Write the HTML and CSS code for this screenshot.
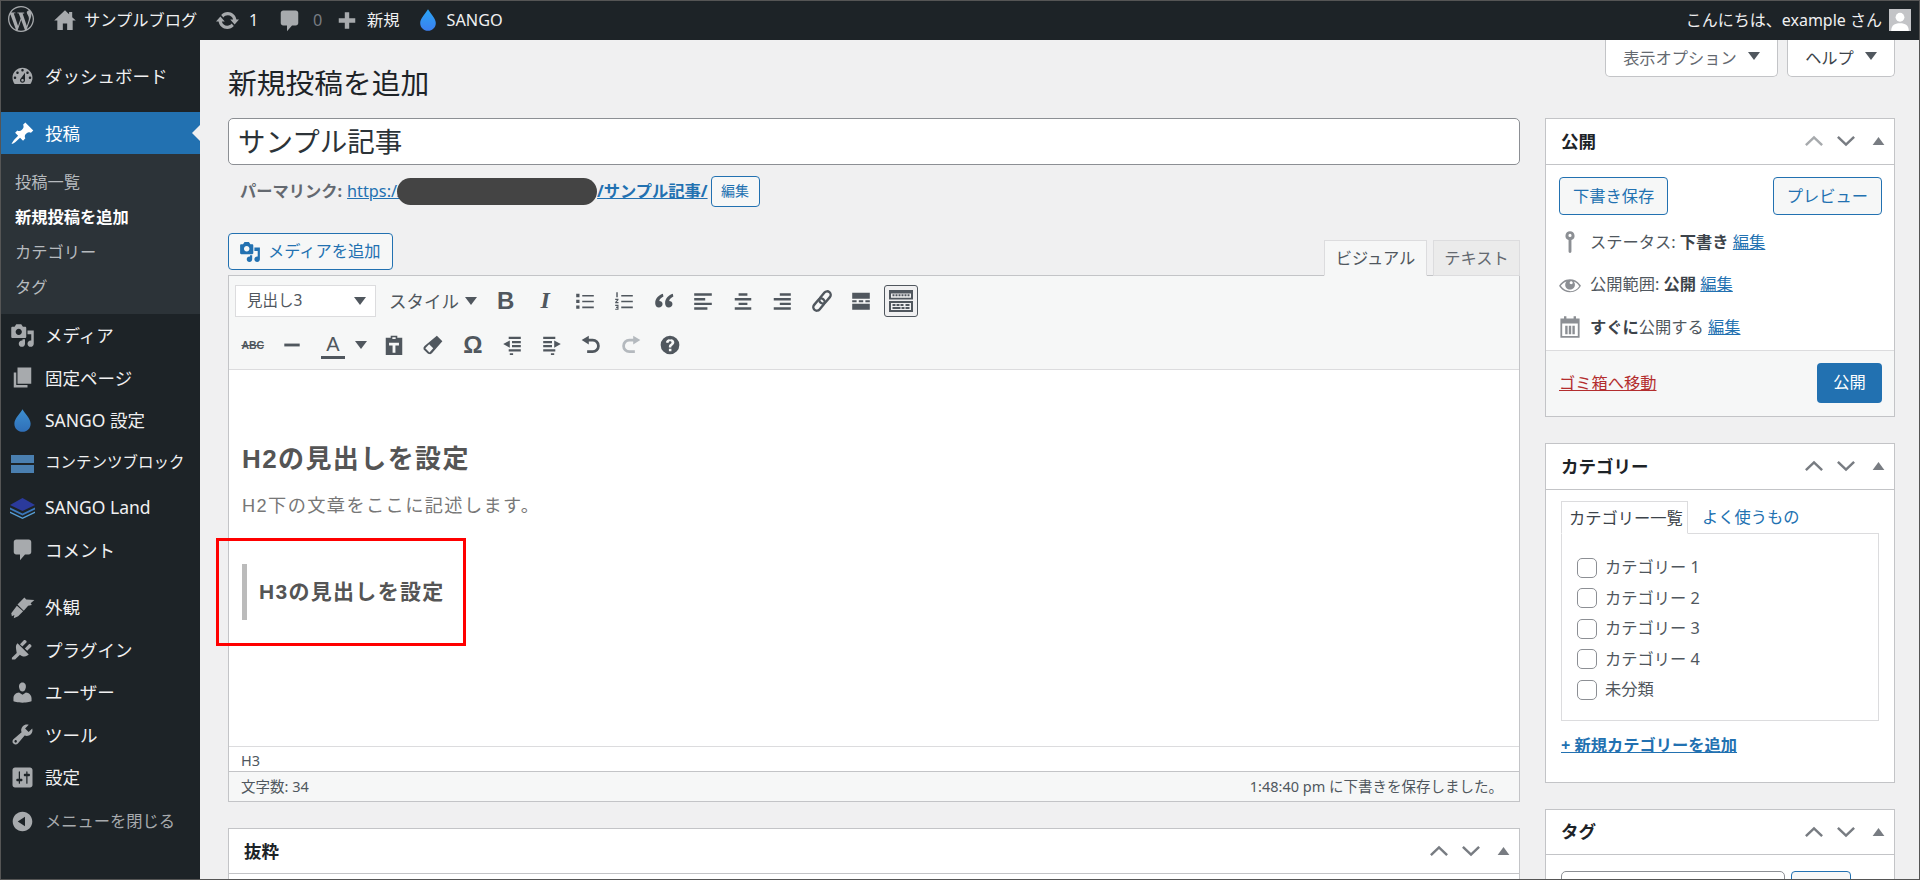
FILE: index.html
```html
<!DOCTYPE html>
<html lang="ja">
<head>
  <meta charset="UTF-8" />
  <title>新規投稿を追加</title>
  <link rel="stylesheet" href="styles.css">
</head>
<body>

<!-- アイコン定義 -->
<svg class="defs" width="0" height="0">
  <defs>
    <linearGradient id="dropBlue" x1="0" y1="0" x2="0" y2="1"><stop offset="0" stop-color="#2aa5f5"/><stop offset="1" stop-color="#3b7ff0"/></linearGradient>
    <linearGradient id="dropDim" x1="0" y1="0" x2="0" y2="1"><stop offset="0" stop-color="#3d8fd0"/><stop offset="1" stop-color="#2f6fb8"/></linearGradient>
  </defs>
  <symbol id="i-wp" viewBox="0 0 24 24"><path d="M21.469 6.825c.84 1.537 1.318 3.3 1.318 5.175 0 3.979-2.156 7.456-5.363 9.325l3.295-9.527c.615-1.54.82-2.771.82-3.864 0-.405-.026-.78-.07-1.11m-7.981.105c.647-.03 1.232-.105 1.232-.105.582-.075.514-.93-.067-.899 0 0-1.755.135-2.88.135-1.064 0-2.85-.15-2.85-.15-.585-.03-.661.855-.075.885 0 0 .54.061 1.125.09l1.68 4.605-2.37 7.08L5.354 6.9c.649-.03 1.234-.1 1.234-.1.585-.075.516-.93-.065-.896 0 0-1.746.138-2.874.138-.2 0-.438-.008-.69-.015C4.911 3.15 8.235 1.215 12 1.215c2.809 0 5.365 1.072 7.286 2.833-.046-.003-.091-.009-.141-.009-1.06 0-1.812.923-1.812 1.914 0 .89.513 1.643 1.06 2.531.411.72.89 1.643.89 2.977 0 .915-.354 1.994-.821 3.479l-1.075 3.585-3.9-11.61.001.014zM12 22.784c-1.059 0-2.081-.153-3.048-.437l3.237-9.406 3.315 9.087c.024.053.05.101.078.149-1.12.393-2.325.609-3.582.609M1.211 12c0-1.564.336-3.05.935-4.39L7.29 21.709C3.694 19.96 1.212 16.271 1.211 12M12 0C5.385 0 0 5.385 0 12s5.385 12 12 12 12-5.385 12-12S18.615 0 12 0"/></symbol>
  <symbol id="i-home" viewBox="0 0 20 20"><path d="M10 1.5L1 10h2.6v8h4.6v-5.5h3.6V18h4.6v-8H19l-3-2.8V3h-2.6v1.8z"/></symbol>
  <symbol id="i-update" viewBox="0 0 20 20"><path d="M10.2 3.28c3.53 0 6.43 2.61 6.92 6h2.08l-3.5 4-3.5-4h2.32c-.45-1.97-2.21-3.45-4.32-3.45-1.45 0-2.73.71-3.54 1.78L4.95 5.66C6.23 4.2 8.11 3.28 10.2 3.28zm-.4 13.44c-3.52 0-6.43-2.61-6.92-6H.8l3.5-4c1.17 1.33 2.33 2.67 3.5 4H5.48c.45 1.97 2.21 3.45 4.32 3.45 1.45 0 2.73-.71 3.54-1.78l1.71 1.95c-1.28 1.46-3.15 2.38-5.25 2.38z"/></symbol>
  <symbol id="i-comment" viewBox="0 0 20 20"><path d="M5 2h10c1.1 0 2 .9 2 2v8c0 1.1-.9 2-2 2h-3l-4 4.5V14H5c-1.1 0-2-.9-2-2V4c0-1.1.9-2 2-2z"/></symbol>
  <symbol id="i-plus" viewBox="0 0 20 20"><path d="M8 2.500h4v5.500h5.500v4H12v5.500H8V12H2.500V8H8z"/></symbol>
  <symbol id="i-drop" viewBox="0 0 20 20"><path d="M10 1c2 3.500 6.500 7.500 6.500 11.500C16.500 16.300 13.600 19 10 19s-6.500-2.700-6.500-6.500C3.500 8.500 8 4.500 10 1z"/></symbol>
  <symbol id="i-dashboard" viewBox="0 0 20 20"><path d="M3.76 16h12.48c1.1-1.37 1.76-3.11 1.76-5 0-4.42-3.58-8-8-8s-8 3.58-8 8c0 1.89.66 3.63 1.76 5zM10 4c.55 0 1 .45 1 1s-.45 1-1 1-1-.45-1-1 .45-1 1-1zM6 6c.55 0 1 .45 1 1s-.45 1-1 1-1-.45-1-1 .45-1 1-1zm8 0c.55 0 1 .45 1 1s-.45 1-1 1-1-.45-1-1 .45-1 1-1zm-5.37 5.55L12 7v6c0 1.1-.9 2-2 2s-2-.9-2-2c0-.57.24-1.08.63-1.45zM4 10c.55 0 1 .45 1 1s-.45 1-1 1-1-.45-1-1 .45-1 1-1zm12 0c.55 0 1 .45 1 1s-.45 1-1 1-1-.45-1-1 .45-1 1-1zm-5 3c0-.55-.45-1-1-1s-1 .45-1 1 .45 1 1 1 1-.45 1-1z" fill-rule="evenodd"/></symbol>
  <symbol id="i-pin" viewBox="0 0 20 20"><path d="M10.44 3.02l1.82-1.82 6.36 6.35-1.83 1.82c-1.05-.68-2.48-.57-3.41.36l-.75.75c-.92.93-1.04 2.35-.35 3.41l-1.83 1.82-2.41-2.41-2.8 2.79c-.42.42-3.38 2.71-3.8 2.29s1.86-3.39 2.28-3.81l2.79-2.79L4.1 9.36l1.83-1.82c1.05.69 2.48.57 3.4-.36l.75-.75c.93-.92 1.05-2.35.36-3.41z"/></symbol>
  <symbol id="i-media" viewBox="0 0 20 20"><path d="M13 11V4c0-.55-.45-1-1-1h-1.670L9 1H5L3.670 3H2c-.55 0-1 .45-1 1v7c0 .55.45 1 1 1h10c.55 0 1-.45 1-1zM7 4.500c1.380 0 2.500 1.120 2.500 2.500S8.380 9.500 7 9.500 4.500 8.380 4.500 7 5.620 4.500 7 4.500zM14 6h5v10.500c0 1.380-1.120 2.500-2.500 2.500S14 17.880 14 16.500s1.120-2.500 2.500-2.500c.17 0 .34.02.5.05V9h-3V6zm-4 8.050V13h2v3.500c0 1.380-1.120 2.500-2.500 2.500S7 17.880 7 16.500 8.120 14 9.500 14c.17 0 .34.02.5.05z" fill-rule="evenodd"/></symbol>
  <symbol id="i-page" viewBox="0 0 20 20"><path d="M6 15V2h11v13H6zm-1 1h9v2H3V6h2v10z"/></symbol>
  <symbol id="i-brush" viewBox="0 0 20 20"><path d="M19.500 4l-6.500-.5-1.500-1.500-5.500 5.500 5 5 3.500-4 3-.5-1-1.500zM5.500 8.500L1 14.500 1.500 17l2-1-.5 2.500 3.500-1.500 4-4z"/></symbol>
  <symbol id="i-plugin" viewBox="0 0 20 20"><path d="M13.110 4.360L9.870 7.600 8 5.730l3.240-3.240c.35-.34 1.050-.2 1.560.32.520.510.660 1.210.310 1.550zm-8 1.770l.91-1.120 9.010 9.010-1.190.84c-.71.520-1.590.760-2.440.760-1.320 0-2.560-.550-3.440-1.420l-3.880 3.880H1.500v-1.500l3.880-3.880C4.760 9.140 4.420 7.490 5.110 6.130zm11.890 1.600l-3.240 3.240-1.870-1.870 3.240-3.240c.35-.34 1.050-.2 1.560.32.510.510.650 1.210.310 1.550z"/></symbol>
  <symbol id="i-users" viewBox="0 0 20 20"><path d="M10 9.250c-2.270 0-2.730-3.440-2.730-3.440C7 4.020 7.820 2 9.970 2c2.160 0 2.980 2.020 2.710 3.810 0 0-.41 3.440-2.680 3.440zm0 2.570L12.720 10c2.390 0 4.520 2.330 4.520 4.530v2.490s-3.650 1.130-7.240 1.130c-3.650 0-7.240-1.130-7.240-1.130v-2.490c0-2.250 1.940-4.480 4.470-4.480z"/></symbol>
  <symbol id="i-tools" viewBox="0 0 20 20"><path d="M16.680 9.770c-1.340 1.340-3.300 1.670-4.950.99l-5.410 6.520c-.99.99-2.590.99-3.580 0s-.99-2.590 0-3.570l6.520-5.420c-.68-1.650-.35-3.610.99-4.950 1.280-1.280 3.120-1.620 4.720-1.060l-2.890 2.890 2.820 2.820 2.860-2.870c.53 1.580.18 3.390-1.080 4.650zM3.810 16.210c.4.39 1.040.39 1.430 0 .4-.4.4-1.040 0-1.430-.39-.4-1.030-.4-1.430 0-.39.39-.39 1.030 0 1.430z" fill-rule="evenodd"/></symbol>
  <symbol id="i-settings" viewBox="0 0 20 20"><path d="M18 16V4c0-1.100-.9-2-2-2H4c-1.100 0-2 .9-2 2v12c0 1.100.9 2 2 2h12c1.100 0 2-.9 2-2zM8 11h1c.55 0 1 .45 1 1s-.45 1-1 1H8v1.500c0 .28-.22.5-.5.5s-.5-.22-.5-.5V13H6c-.55 0-1-.45-1-1s.45-1 1-1h1V5.500c0-.28.22-.5.5-.5s.5.22.5.5V11zm5-2h-1c-.55 0-1-.45-1-1s.45-1 1-1h1V5.500c0-.28.22-.5.5-.5s.5.22.5.5V7h1c.55 0 1 .45 1 1s-.45 1-1 1h-1v5.500c0 .28-.22.5-.5.5s-.5-.22-.5-.5V9z" fill-rule="evenodd"/></symbol>
  <symbol id="i-collapse" viewBox="0 0 20 20"><path d="M10 2.160c4.330 0 7.840 3.510 7.840 7.840s-3.510 7.840-7.840 7.840S2.160 14.330 2.160 10 5.710 2.160 10 2.160zm2 11.720V6.120L6.180 9.970z" fill-rule="evenodd"/></symbol>
  <symbol id="i-key" viewBox="0 0 20 20"><path d="M10 1a3.800 3.800 0 0 1 1.200 7.400V18a1.200 1.200 0 0 1-2.400 0V8.400A3.800 3.800 0 0 1 10 1zm0 2.200a1.300 1.300 0 1 0 0 2.600 1.300 1.300 0 0 0 0-2.600z" fill-rule="evenodd"/></symbol>
  <symbol id="i-eye" viewBox="0 0 20 20"><path d="M18.300 9.500C15 4.900 8.500 3.800 3.900 7.200c-1.200.9-2.200 2.100-3 3.400.2.4.5.8.8 1.200 3.300 4.600 9.600 5.600 14.200 2.400.9-.7 1.700-1.400 2.400-2.400.3-.4.5-.8.8-1.200-.3-.4-.5-.8-.8-1.100zm-8.200-2.300c.5-.5 1.300-.5 1.800 0s.5 1.300 0 1.800-1.300.5-1.800 0c-.5-.5-.5-1.300 0-1.800zm-.1 7.700c-3.100 0-6-1.600-7.700-4.200C3.500 9 5.100 7.800 7 7c-.7.8-1 1.700-1 2.700 0 2.200 1.700 4.100 4 4.100 2.200 0 4.100-1.700 4.100-4 0-1-.4-2-1-2.700 1.900.8 3.400 2 4.600 3.900-1.700 2.700-4.600 4.200-7.700 4.200z" fill-rule="evenodd"/></symbol>
  <symbol id="i-calendar" viewBox="0 0 20 20"><path d="M5 1h2v2h6V1h2v2h3v16H2V3h3zM3.500 7v10.500h13V7zM6 9h2v7H6zm3 0h2v7H9zm3 0h2v7h-2z" fill-rule="evenodd"/></symbol>
  <symbol id="i-up" viewBox="0 0 20 20"><path d="M1 14.500L10 6l9 8.500" fill="none" stroke="currentColor" stroke-width="2.800"/></symbol>
  <symbol id="i-down" viewBox="0 0 20 20"><path d="M1 5.500L10 14l9-8.500" fill="none" stroke="currentColor" stroke-width="2.800"/></symbol>
  <symbol id="i-tri" viewBox="0 0 20 20"><path d="M10 4l9 12H1z"/></symbol>
  <symbol id="i-ul" viewBox="0 0 20 20"><path d="M2 3.500h3v3H2zM2 8.800h3v3H2zM2 14h3v3H2zM7.500 4.500H18V6H7.500zM7.500 9.700H18v1.500H7.500zM7.500 15H18v1.500H7.500z"/></symbol>
  <symbol id="i-ol" viewBox="0 0 20 20"><path d="M7.500 4.500H18V6H7.500zM7.500 9.700H18v1.500H7.500zM7.500 15H18v1.500H7.500zM3 2h1.300v4.500H3zM2 8h3v1l-1.700 2H5v1H2v-1l1.700-2H2zM2 13.500h3v4.500H2v-1h2v-.7H2.800v-1H4v-.8H2z"/></symbol>
  <symbol id="i-quote" viewBox="0 0 20 20"><path d="M9 3.500C5.500 4.500 2 7.500 2 12c0 2.500 1.500 4 3.300 4s3.400-1.300 3.400-3.200-1.300-2.900-3-2.900C6 8.300 7.500 7 9.500 6zM18 3.500c-3.500 1-7 4-7 8.500 0 2.500 1.500 4 3.300 4s3.400-1.300 3.400-3.200-1.300-2.900-3-2.900c.3-1.600 1.800-2.900 3.800-3.900z"/></symbol>
  <symbol id="i-left" viewBox="0 0 20 20"><path d="M2 3h16v2.200H2zM2 7.300h10v2.200H2zM2 11.500h16v2.200H2zM2 15.700h12v2.200H2z"/></symbol>
  <symbol id="i-center" viewBox="0 0 20 20"><path d="M6 3h8v2.200H6zM2.500 7.300h15v2.200h-15zM6 11.500h8v2.200H6zM2.500 15.700h15v2.200h-15z"/></symbol>
  <symbol id="i-right" viewBox="0 0 20 20"><path d="M8 3h10v2.200H8zM2.500 7.300H18v2.200H2.500zM8 11.500h10v2.200H8zM2.500 15.700H18v2.200H2.500z"/></symbol>
  <symbol id="i-link" viewBox="0 0 20 20"><g transform="rotate(-50 10 10)" fill="none" stroke="currentColor" stroke-width="2.200"><rect x="-0.500" y="6.800" width="12.500" height="6.400" rx="3.200"/><rect x="8" y="6.800" width="12.500" height="6.400" rx="3.200"/></g></symbol>
  <symbol id="i-more" viewBox="0 0 20 20"><path d="M2 2.500h16v5.500H2zM2 12.500h16V18H2zM2 9.300h4v1.800H2zM8 9.300h4v1.800H8zM14 9.300h4v1.800h-4z"/></symbol>
  <symbol id="i-kitchen" viewBox="0 0 26 24"><path d="M1 1h24v9.500H1zM3 4.500v4.200h20V4.500zM4.500 5.200h2v2h-2zm3 0h2v2h-2zm3 0h2v2h-2zm3 0h2v2h-2zm3 0h2v2h-2zm3 0h2v2h-2zM1 12h24v11H1zm2 2v7h20v-7zm1.500 1h3v2h-3zm4 0h3v2h-3zm4 0h3v2h-3zm-8 3h8v2h-8zm9 0h3v2h-3zm4-3h4v2h-4zm0 3h4v2h-4z" fill-rule="evenodd"/></symbol>
  <symbol id="i-hr" viewBox="0 0 20 20"><path d="M3 8.700h14v2.600H3z"/></symbol>
  <symbol id="i-paste" viewBox="0 0 20 20"><path d="M7 1.500h6v2h4.500V19h-15V3.500H7zM8.500 3v1.500h3V3zM5.500 8v2.500h3.200V17h2.600v-6.500h3.200V8z" fill-rule="evenodd"/></symbol>
  <symbol id="i-eraser" viewBox="0 0 20 20"><path d="M13.500 1.500l5 5L9 17.500l-1.500 1L5.500 18 1.500 14l-.2-1.500 1-1.500zM3 13l3.800 3.800 3.400-3.900-3.700-3.600z" fill-rule="evenodd"/></symbol>
  <symbol id="i-outdent" viewBox="0 0 20 20"><path d="M7 2.500h11v2H7zM10 6.300h8v2h-8zM10 10h8v2h-8zM7 13.800h11v2H7zM8 17.500h3v1.500H8zM8 6l-6 3.200L8 12.500z"/></symbol>
  <symbol id="i-indent" viewBox="0 0 20 20"><path d="M2 2.500h11v2H2zM2 6.300h8v2H2zM2 10h8v2H2zM2 13.800h11v2H2zM9 17.500h3v1.500H9zM12 6l6 3.200-6 3.300z"/></symbol>
  <symbol id="i-undo" viewBox="0 0 20 20"><path d="M8 1.500v8L1.500 5.500zM7 4.300h4.500a6.500 6.500 0 0 1 0 13H6.500v-2.500h5a4 4 0 0 0 0-8H7z"/></symbol>
  <symbol id="i-redo" viewBox="0 0 20 20"><path d="M12 1.500v8l6.500-4zM13 4.300H8.500a6.500 6.500 0 0 0 0 13h5v-2.500h-5a4 4 0 0 1 0-8H13z"/></symbol>
  <symbol id="i-help" viewBox="0 0 20 20"><path d="M10 1.500a8.500 8.500 0 1 1 0 17 8.500 8.500 0 0 1 0-17zM9 13.300v2.400h2.300v-2.400zM10.200 4.500C8 4.500 6.500 5.700 6.300 7.800l2.300.3c.1-1 .7-1.500 1.500-1.500s1.300.4 1.300 1.100c0 .6-.4 1-1.100 1.500-1 .7-1.400 1.400-1.300 3h2.200c0-.9.200-1.200 1-1.800 1-.7 1.700-1.500 1.700-2.800 0-2-1.500-3.100-3.800-3.100z" fill-rule="evenodd"/></symbol>
</svg>

<!-- 上のバー -->
<div class="adminbar">
  <svg class="ab-wp"><use href="#i-wp"/></svg>
  <div class="ab-item ab-site"><svg class="ab-ico"><use href="#i-home"/></svg>サンプルブログ</div>
  <div class="ab-item ab-up"><svg class="ab-ico"><use href="#i-update"/></svg>1</div>
  <div class="ab-item ab-com"><svg class="ab-ico"><use href="#i-comment"/></svg><span class="dim">0</span></div>
  <div class="ab-item ab-new"><svg class="ab-ico"><use href="#i-plus"/></svg>新規</div>
  <div class="ab-item ab-sango"><svg class="ab-drop"><use href="#i-drop" fill="url(#dropBlue)"/></svg>SANGO</div>
  <div class="ab-user">こんにちは、example さん<span class="avatar"><svg viewBox="0 0 20 20"><circle cx="10" cy="7.500" r="4"/><path d="M2 20c0-5 3-7 8-7s8 2 8 7z"/></svg></span></div>
</div>

<div class="wrap">
  <!-- サイドメニュー -->
  <div class="sidebar">
    <div class="menu-item sep-after"><svg><use href="#i-dashboard"/></svg>ダッシュボード</div>
    <div class="menu-item active"><svg><use href="#i-pin"/></svg>投稿</div>
    <div class="submenu">
      <div class="sub-item">投稿一覧</div>
      <div class="sub-item current">新規投稿を追加</div>
      <div class="sub-item">カテゴリー</div>
      <div class="sub-item">タグ</div>
    </div>
    <div class="menu-item"><svg><use href="#i-media"/></svg>メディア</div>
    <div class="menu-item"><svg><use href="#i-page"/></svg>固定ページ</div>
    <div class="menu-item"><svg><use href="#i-drop" fill="url(#dropDim)"/></svg>SANGO 設定</div>
    <div class="menu-item small"><svg viewBox="0 0 25 25"><path class="bars" d="M1 5h23v8H1zM1 15h23v8H1z"/></svg>コンテンツブロック</div>
    <div class="menu-item"><svg viewBox="0 0 25 25"><path d="M12.500 3L25 10l-12.500 6L0 10z" fill="#2b3a9c"/><path d="M0 12.500l12.500 6 12.500-6v2l-12.500 6L0 14.500z" fill="#3a78bd"/><path d="M0 16.500l12.500 6 12.500-6v1.500l-12.500 6L0 18z" fill="#58a0d8"/></svg>SANGO Land</div>
    <div class="menu-item sep-small"><svg><use href="#i-comment"/></svg>コメント</div>
    <div class="menu-item"><svg><use href="#i-brush"/></svg>外観</div>
    <div class="menu-item"><svg><use href="#i-plugin"/></svg>プラグイン</div>
    <div class="menu-item"><svg><use href="#i-users"/></svg>ユーザー</div>
    <div class="menu-item"><svg><use href="#i-tools"/></svg>ツール</div>
    <div class="menu-item"><svg><use href="#i-settings"/></svg>設定</div>
    <div class="menu-item collapse"><svg><use href="#i-collapse"/></svg>メニューを閉じる</div>
  </div>

  <div class="content">
    <div class="page-head">
      <h1>新規投稿を追加</h1>
      <div class="screen-tabs">
        <div class="screen-tab tab-options">表示オプション<i class="caret"></i></div>
        <div class="screen-tab tab-help">ヘルプ<i class="caret"></i></div>
      </div>
    </div>

    <div class="columns">
      <div class="col-main">
        <div class="title-input">サンプル記事</div>
        <div class="permalink">
          <b>パーマリンク:</b>
          <a href="#" class="perma-url">https://</a><span class="blob"></span><a href="#"><b>/サンプル記事/</b></a>
          <span class="btn-edit">編集</span>
        </div>

        <div class="media-row">
          <div class="btn btn-media"><svg><use href="#i-media"/></svg>メディアを追加</div>
          <div class="editor-tabs">
            <div class="editor-tab on">ビジュアル</div>
            <div class="editor-tab">テキスト</div>
          </div>
        </div>

        <div class="editor">
          <div class="toolbar">
            <div class="tb-row">
              <div class="tb-select">見出し3<i class="caret"></i></div>
              <div class="tb-style">スタイル<i class="caret"></i></div>
              <span class="tb-btn tb-b">B</span>
              <span class="tb-btn tb-i">I</span>
              <span class="tb-btn"><svg><use href="#i-ul"/></svg></span>
              <span class="tb-btn"><svg><use href="#i-ol"/></svg></span>
              <span class="tb-btn"><svg><use href="#i-quote"/></svg></span>
              <span class="tb-btn"><svg><use href="#i-left"/></svg></span>
              <span class="tb-btn"><svg><use href="#i-center"/></svg></span>
              <span class="tb-btn"><svg><use href="#i-right"/></svg></span>
              <span class="tb-btn"><svg><use href="#i-link"/></svg></span>
              <span class="tb-btn"><svg><use href="#i-more"/></svg></span>
              <span class="tb-btn tb-kitchen"><svg><use href="#i-kitchen"/></svg></span>
            </div>
            <div class="tb-row">
              <span class="tb-btn tb-abc">ABC</span>
              <span class="tb-btn"><svg><use href="#i-hr"/></svg></span>
              <span class="tb-btn tb-color"><span class="tb-a">A</span><i class="caret"></i></span>
              <span class="tb-btn"><svg><use href="#i-paste"/></svg></span>
              <span class="tb-btn"><svg><use href="#i-eraser"/></svg></span>
              <span class="tb-btn tb-omega">Ω</span>
              <span class="tb-btn"><svg><use href="#i-outdent"/></svg></span>
              <span class="tb-btn"><svg><use href="#i-indent"/></svg></span>
              <span class="tb-btn"><svg><use href="#i-undo"/></svg></span>
              <span class="tb-btn tb-off"><svg><use href="#i-redo"/></svg></span>
              <span class="tb-btn"><svg><use href="#i-help"/></svg></span>
            </div>
          </div>

          <div class="editor-body">
            <h2>H2の見出しを設定</h2>
            <p>H2下の文章をここに記述します。</p>
            <h3>H3の見出しを設定</h3>
            <div class="red-box"></div>
          </div>
          <div class="path-row">H3</div>
          <div class="status-row"><span>文字数: 34</span><span>1:48:40 pm に下書きを保存しました。</span></div>
        </div>

        <div class="box box-excerpt">
          <div class="box-head">抜粋
            <span class="box-ctrl"><svg><use href="#i-up"/></svg><svg><use href="#i-down"/></svg><svg class="tri"><use href="#i-tri"/></svg></span>
          </div>
        </div>
      </div>

      <div class="col-side">
        <div class="box">
          <div class="box-head">公開
            <span class="box-ctrl"><svg class="off"><use href="#i-up"/></svg><svg><use href="#i-down"/></svg><svg class="tri"><use href="#i-tri"/></svg></span>
          </div>
          <div class="pub-actions">
            <div class="btn">下書き保存</div>
            <div class="btn">プレビュー</div>
          </div>
          <div class="pub-row"><svg><use href="#i-key"/></svg><span>ステータス: <b>下書き</b> <a href="#">編集</a></span></div>
          <div class="pub-row"><svg><use href="#i-eye"/></svg><span>公開範囲: <b>公開</b> <a href="#">編集</a></span></div>
          <div class="pub-row"><svg><use href="#i-calendar"/></svg><span><b>すぐに</b>公開する <a href="#">編集</a></span></div>
          <div class="pub-foot">
            <a href="#" class="trash">ゴミ箱へ移動</a>
            <div class="btn-primary">公開</div>
          </div>
        </div>

        <div class="box box-cat">
          <div class="box-head">カテゴリー
            <span class="box-ctrl"><svg><use href="#i-up"/></svg><svg><use href="#i-down"/></svg><svg class="tri"><use href="#i-tri"/></svg></span>
          </div>
          <div class="cat-body">
            <div class="cat-tabs">
              <div class="cat-tab on">カテゴリー一覧</div>
              <a href="#" class="cat-tab cat-link">よく使うもの</a>
            </div>
            <div class="cat-panel">
              <label class="cat-row"><input type="checkbox" />カテゴリー 1</label>
              <label class="cat-row"><input type="checkbox" />カテゴリー 2</label>
              <label class="cat-row"><input type="checkbox" />カテゴリー 3</label>
              <label class="cat-row"><input type="checkbox" />カテゴリー 4</label>
              <label class="cat-row"><input type="checkbox" />未分類</label>
            </div>
            <a href="#" class="cat-add"><b>+ 新規カテゴリーを追加</b></a>
          </div>
        </div>

        <div class="box box-tag">
          <div class="box-head">タグ
            <span class="box-ctrl"><svg><use href="#i-up"/></svg><svg><use href="#i-down"/></svg><svg class="tri"><use href="#i-tri"/></svg></span>
          </div>
          <div class="tag-body">
            <span class="tag-input"></span>
            <span class="tag-btn"></span>
          </div>
        </div>
      </div>
    </div>
  </div>
</div>

<!-- 画像の外枠 -->
<div class="frame"></div>

</body>
</html>
```

FILE: styles.css
```css
* { box-sizing: border-box; }
html, body { height: 880px; overflow: hidden; }
body { margin: 0; background: #f0f0f1; color: #3c434a; font: 16.25px/1.4 "Noto Sans", "Noto Sans CJK JP", sans-serif; }
a { color: #2271b1; }
h1, h2, h3, p { margin: 0; font-weight: 400; }
.defs { position: absolute; }
.frame { position: fixed; inset: 0; border: 1px solid #555; pointer-events: none; }

/* 上のバー */
.adminbar { height: 40px; background: #1d2327; color: #f0f0f1; display: flex; align-items: center; padding-left: 8px; line-height: 40px; }
.adminbar svg { fill: #a7aaad; flex: none; }
.ab-wp { width: 26px; height: 26px; margin-right: 21px; margin-top: -3px; }
.ab-item { display: flex; align-items: center; }
.ab-ico { width: 25px; height: 25px; margin-right: 5px; }
.ab-site { width: 162px; margin-left: -2px; }
.ab-site .ab-ico { width: 24px; margin-right: 7px; }
.ab-up { width: 62px; }
.ab-up .ab-ico { margin-right: 9px; }
.ab-com { width: 59px; }
.ab-com .ab-ico { margin-right: 11px; }
.ab-com .dim { color: #787c82; }
.ab-new { width: 78px; }
.ab-new .ab-ico { width: 22px; margin-right: 9px; }
.ab-drop { width: 24px; height: 24px; margin-right: 6.5px; margin-left: 2px; }
.ab-user { margin-left: auto; display: flex; align-items: center; font-size: 16px; padding-right: 9px; }
.avatar { width: 22px; height: 22px; background: #c3c4c7; margin-left: 7px; display: block; }
.adminbar .avatar svg { display: block; width: 22px; height: 22px; fill: #fff; }

.wrap { display: flex; height: 840px; overflow: hidden; }

/* サイドメニュー */
.sidebar { width: 200px; flex: none; background: #1d2327; color: #f0f0f1; font-size: 17.5px; padding-top: 15px; }
.menu-item { height: 42.5px; display: flex; align-items: center; padding-left: 10px; white-space: nowrap; }
.menu-item svg { width: 25px; height: 25px; margin-right: 10px; fill: #a7aaad; flex: none; }
.menu-item .bars { fill: #4a7fb0; }
.sep-after { margin-bottom: 14.5px; }
.sep-small { margin-bottom: 15px; }
.small { font-size: 15.5px; margin-bottom: 2px; }
.active { height: 42px; background: #2271b1; color: #fff; position: relative; }
.active svg { fill: #fff; }
.active::after { content: ""; position: absolute; right: 0; top: 13px; border: 8px solid transparent; border-right-color: #f0f0f1; }
.submenu { background: #2c3338; height: 160px; padding-top: 11px; font-size: 16.25px; color: #b6babe; }
.sub-item { height: 35px; line-height: 35px; padding-left: 15px; }
.current { color: #fff; font-weight: 700; }
.collapse { color: #a7aaad; font-size: 16.25px; margin-top: 1.5px; }

.content { flex: 1; padding: 0 25px 0 28px; min-width: 0; }
.page-head { display: flex; justify-content: space-between; height: 78px; }
h1 { font-size: 28.75px; line-height: 40px; color: #1d2327; margin-top: 23px; }
.screen-tabs { display: flex; gap: 9px; }
.screen-tab { height: 37px; background: #fff; border: 1px solid #c3c4c7; border-top: none; border-radius: 0 0 5px 5px; color: #646970; display: flex; align-items: center; justify-content: center; }
.tab-options { width: 173px; }
.tab-help { width: 108px; color: #3c434a; }
.caret { display: inline-block; border: 6px solid transparent; border-top: 8px solid currentColor; border-bottom: none; margin-left: 11px; }
.screen-tab .caret { margin-top: -5px; color: #50575e; }

.columns { display: grid; grid-template-columns: 1292px 350px; column-gap: 25px; }

.title-input { height: 47px; background: #fff; border: 1px solid #8c8f94; border-radius: 5px; font-size: 27.5px; line-height: 45px; padding-left: 9px; color: #2c3338; }
.permalink { display: flex; align-items: center; height: 31px; margin-top: 11px; padding-left: 12px; color: #646970; white-space: nowrap; }
.perma-url { margin-left: 5px; }
.blob { width: 200px; height: 27px; background: #444; border-radius: 14px; margin-left: -6px; }
.btn-edit { margin-left: 3px; height: 31px; width: 49px; border: 1px solid #2271b1; border-radius: 4px; background: #f6f7f7; color: #2271b1; font-size: 14px; line-height: 28px; text-align: center; }

.media-row { display: flex; justify-content: space-between; align-items: flex-end; height: 42px; margin-top: 26px; }
.btn { height: 38px; padding: 0 14px; border: 1px solid #2271b1; border-radius: 4px; background: #f6f7f7; color: #2271b1; display: flex; align-items: center; white-space: nowrap; }
.btn-media { height: 37px; width: 165px; margin-bottom: 5px; padding: 0 10px; }
.btn-media svg { width: 22px; height: 22px; fill: #2271b1; margin-right: 7px; flex: none; }
.editor-tabs { display: flex; gap: 6px; margin-bottom: -1px; position: relative; }
.editor-tab { height: 36px; padding: 0 8px; border: 1px solid #dcdcde; background: #ebebeb; color: #646970; line-height: 34px; width: 87px; text-align: center; white-space: nowrap; }
.editor-tab.on { width: 103px; background: #f6f7f7; border-color: #dcdcde #dcdcde #f6f7f7; color: #50575e; }

.editor { border: 1px solid #c3c4c7; background: #fff; }
.toolbar { height: 94px; background: #f6f7f7; padding: 9px 0 0 4px; border-bottom: 1px solid #dcdcde; }
.tb-row { display: flex; align-items: center; height: 32px; margin-bottom: 12px; color: #50575e; }
.tb-select { width: 141px; height: 32px; margin-left: 2px; background: #fff; border: 1px solid #dcdcde; display: flex; align-items: center; justify-content: space-between; padding: 0 9px 0 11px; font-size: 15.5px; }
.tb-select .caret, .tb-style .caret { margin: 0; }
.tb-style { width: 110px; padding-left: 13px; display: flex; align-items: center; font-size: 17.5px; gap: 6px; }
.tb-btn { width: 39.5px; height: 32px; flex: none; display: flex; align-items: center; justify-content: center; font-family: "Liberation Sans", sans-serif; }
.tb-btn svg { width: 22px; height: 22px; fill: #50575e; }
.tb-b { font-size: 24px; font-weight: 700; }
.tb-i { font-family: "Liberation Serif", serif; font-style: italic; font-weight: 700; font-size: 24px; }
.tb-abc { font-size: 10.5px; font-weight: 700; text-decoration: line-through; }
.tb-omega { font-size: 24px; font-weight: 700; }
.tb-off svg { fill: #b4b9be; }
.tb-kitchen { width: 34px; margin-left: 3px; background: #f0f0f1; border: 1px solid #50575e; border-radius: 3px; }
.tb-kitchen svg { width: 26px; height: 24px; }
.tb-color { width: 62px; justify-content: flex-start; gap: 10px; padding-left: 9px; }
.tb-color .caret { margin: 0; }
.tb-a { width: 24px; height: 27px; line-height: 24px; font-size: 20px; text-align: center; border-bottom: 3px solid #50575e; }

.editor-body { height: 376px; padding: 72px 0 0 13px; position: relative; color: #555; font-family: "Liberation Sans", "Noto Sans CJK JP", sans-serif; }
h2 { font-size: 26px; line-height: 34px; font-weight: 700; letter-spacing: 1.4px; }
.editor-body p { font-size: 18.2px; line-height: 26px; margin-top: 17px; letter-spacing: 1.4px; color: #777; }
h3 { height: 56px; margin-top: 45px; border-left: 5px solid #bbb; padding-left: 12px; font-size: 21px; line-height: 56px; font-weight: 700; letter-spacing: 1.3px; }
.red-box { position: absolute; left: -13px; top: 168px; width: 250px; height: 108px; border: 3px solid #f00; }
.path-row { height: 26px; line-height: 26px; padding-left: 12px; font-size: 14.5px; color: #50575e; border-top: 1px solid #dcdcde; border-bottom: 1px solid #c3c4c7; }
.status-row { height: 29px; background: #f6f7f7; display: flex; justify-content: space-between; align-items: center; padding: 0 16px 0 12px; font-size: 14.5px; color: #50575e; }

/* メタボックス */
.box { background: #fff; border: 1px solid #c3c4c7; }
.box-head { height: 46px; padding-left: 15px; display: flex; align-items: center; font-size: 17.5px; font-weight: 700; color: #1d2327; border-bottom: 1px solid #c3c4c7; position: relative; }
.box-ctrl { position: absolute; right: 9px; top: 11px; display: flex; gap: 14px; color: #787c82; }
.box-ctrl svg { width: 18px; height: 22px; }
.box-ctrl .off { color: #a7aaad; }
.box-ctrl .tri { width: 13px; margin-left: 3px; fill: #787c82; }
.box-excerpt { margin-top: 26px; height: 60px; }
.box-excerpt .box-head { height: 45px; }

.pub-actions { display: flex; justify-content: space-between; padding: 12px 12px 0 13px; }
.pub-actions .btn { padding: 0 13px; }
.pub-row { height: 42.5px; display: flex; align-items: center; padding-left: 12px; white-space: nowrap; color: #50575e; }
.pub-actions + .pub-row { margin-top: 6px; }
.pub-row svg { width: 24px; height: 24px; fill: #8c8f94; margin-right: 8px; flex: none; }
.pub-row b { color: #3c434a; }
.pub-foot { height: 66px; background: #f6f7f7; border-top: 1px solid #dcdcde; margin-top: 1px; display: flex; justify-content: space-between; align-items: center; padding: 0 12px 0 13px; }
.trash { color: #b32d2e; }
.btn-primary { width: 65px; height: 40px; background: #2271b1; color: #fff; border-radius: 4px; text-align: center; line-height: 38px; }

.box-cat { margin-top: 26px; height: 340px; }
.cat-body { padding: 11px 15px 0; }
.cat-tabs { display: flex; height: 33px; margin-bottom: -1px; position: relative; }
.cat-tab { height: 33px; padding: 0 7px; line-height: 32px; }
.cat-tab.on { width: 127px; background: #fff; border: 1px solid #dcdcde; border-bottom-color: #fff; color: #3c434a; white-space: nowrap; }
.cat-link { margin-left: 7px; text-decoration: none; }
.cat-panel { height: 188px; border: 1px solid #dcdcde; padding: 19px 15px 0; }
.cat-row { display: flex; align-items: center; height: 30.5px; color: #50575e; }
.cat-row input { appearance: none; width: 20px; height: 20px; margin: 0 8px 0 0; background: #fff; border: 1px solid #8c8f94; border-radius: 5px; }
.cat-add { display: inline-block; margin-top: 13px; }

.box-tag { margin-top: 26px; height: 72px; overflow: hidden; }
.box-tag .box-head { height: 45px; }
.tag-body { display: flex; padding: 16px 15px 0; gap: 6px; }
.tag-input { width: 224px; height: 38px; border: 1px solid #8c8f94; border-radius: 5px; }
.tag-btn { width: 60px; height: 38px; border: 1px solid #2271b1; border-radius: 4px; background: #f6f7f7; }
```
